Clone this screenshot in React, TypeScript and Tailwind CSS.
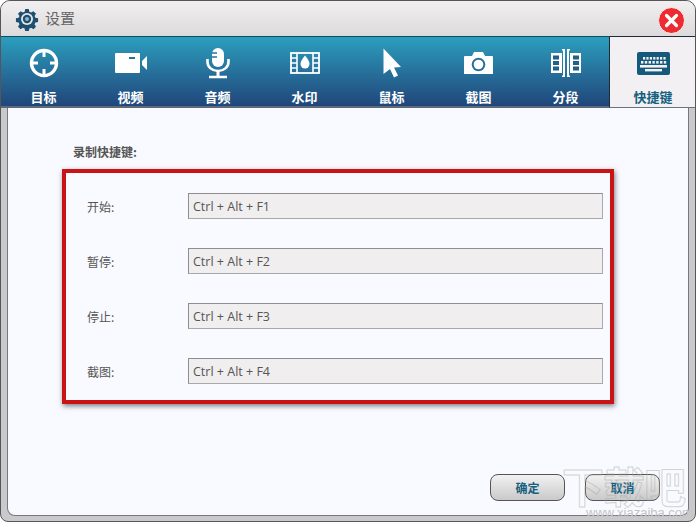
const cjk = { fontFamily: '"Noto Sans CJK SC", sans-serif' };

function Target() {
  return (
    <svg width="32" height="32" viewBox="0 0 32 32" fill="none" stroke="#fff">
      <circle cx="16" cy="16" r="12.5" strokeWidth="3.4" />
      <path d="M16 3v7M16 22v7M3 16h7M22 16h7" strokeWidth="3" />
    </svg>
  );
}
function Video() {
  return (
    <svg width="34" height="22" viewBox="0 0 34 22" fill="#fff">
      <path d="M2 1h23a1 1 0 0 1 1 1v18a1 1 0 0 1-1 1H2a1 1 0 0 1-1-1V2a1 1 0 0 1 1-1z" />
      <path d="M28 9l5-5v14l-5-5z" />
      <rect x="15" y="5" width="6" height="2" fill="#2a7196" />
    </svg>
  );
}
function Mic() {
  return (
    <svg width="26" height="32" viewBox="0 0 26 32" fill="none" stroke="#fff">
      <rect x="7" y="1" width="12" height="19" rx="6" fill="#fff" stroke="none" />
      <path d="M7 6h5M7 10h5" stroke="#27739a" strokeWidth="1.4" />
      <path d="M2.500 12v3a10.500 9 0 0 0 21 0v-3" strokeWidth="2.600" />
      <path d="M13 24v5" strokeWidth="3" />
      <path d="M4 30h18" strokeWidth="2.600" />
    </svg>
  );
}
function Film() {
  return (
    <svg width="30" height="22" viewBox="0 0 30 22" fill="none" stroke="#fff">
      <rect x="1" y="1" width="28" height="20" strokeWidth="1.800" />
      <path d="M7 1v20M23 1v20M1 6h6M1 11h6M1 16h6M23 6h6M23 11h6M23 16h6" strokeWidth="1.600" />
      <path d="M15 3.500c3 3.500 4.500 6 4.500 8.500a4.500 4.500 0 0 1-9 0c0-2.500 1.500-5 4.500-8.500z" fill="#fff" stroke="none" />
    </svg>
  );
}
function Cursor() {
  return (
    <svg width="20" height="30" viewBox="0 0 20 30" fill="#fff">
      <path d="M1.500 0.500L19 19l-7 .5 4 8-4 2-4-8.500-6.500 5z" />
    </svg>
  );
}
function Camera() {
  return (
    <svg width="29" height="24" viewBox="0 0 29 24" fill="#fff">
      <path d="M1 5h7l2-4h9l2 4h7a1 1 0 0 1 1 1v17H0V6a1 1 0 0 1 1-1z" />
      <circle cx="14.500" cy="13.500" r="6.800" fill="#2a6f94" />
      <circle cx="14.500" cy="13.500" r="4.800" fill="#fff" />
    </svg>
  );
}
function Segment() {
  return (
    <svg width="30" height="28" viewBox="0 0 30 28" fill="#fff">
      <path d="M0 4h11v20H0z" />
      <path d="M19 4h11v20H19z" />
      <path d="M11 0h3v28h-3v-1.500h1V1.500h-1z" />
      <path d="M19 0h-3v28h3v-1.500h-1V1.500h1z" />
      <g fill="#235f88">
        <rect x="2" y="6.500" width="6" height="4" />
        <rect x="2" y="12" width="6" height="4" />
        <rect x="2" y="17.500" width="6" height="4" />
        <rect x="22" y="6.500" width="6" height="4" />
        <rect x="22" y="12" width="6" height="4" />
        <rect x="22" y="17.500" width="6" height="4" />
      </g>
    </svg>
  );
}
function Keyboard() {
  const keys: [number, number, number][] = [];
  [0, 1, 2, 3, 4, 5, 6].forEach((i) => keys.push([6 + i * 3.4, 5, 2.2]));
  [0, 1, 2, 3, 4, 5, 6].forEach((i) => keys.push([4 + i * 3.8, 9, 2.4]));
  return (
    <svg width="33" height="23" viewBox="0 0 33 23">
      <rect x="0" y="0" width="33" height="23" rx="2" fill="#155a7c" />
      {keys.map(([x, y, w], i) => (
        <rect key={i} x={x} y={y} width={w} height="2.600" fill="#f2f0f2" />
      ))}
      <rect x="3" y="13" width="27" height="2.600" fill="#f2f0f2" />
      <rect x="8" y="17" width="17" height="2.400" fill="#f2f0f2" />
    </svg>
  );
}

const tabs = [
  { label: "目标", icon: <Target /> },
  { label: "视频", icon: <Video /> },
  { label: "音频", icon: <Mic /> },
  { label: "水印", icon: <Film /> },
  { label: "鼠标", icon: <Cursor /> },
  { label: "截图", icon: <Camera /> },
  { label: "分段", icon: <Segment /> },
];

const rows = [
  ["开始:", "Ctrl + Alt + F1"],
  ["暂停:", "Ctrl + Alt + F2"],
  ["停止:", "Ctrl + Alt + F3"],
  ["截图:", "Ctrl + Alt + F4"],
];

export default function App() {
  return (
    <div className="relative w-[696px] h-[522px] overflow-hidden bg-white" style={cjk}>
      <div className="flex flex-col w-full h-full rounded-t-[10px] rounded-b-[8px] border border-[#55565a] bg-[#c9c9cc] overflow-hidden">
        <div className="relative flex items-center h-[35px] shrink-0 bg-gradient-to-b from-[#f1eff0] to-[#dcdadb] pl-[14px]">
          <svg width="24" height="24" viewBox="0 0 24 24" className="mr-[6px]" fill="#1c4f70">
            <path d="M10 1h4l.6 3 2 .9 2.600-1.600 2.800 2.800-1.600 2.600.9 2 3 .6v4l-3 .6-.9 2 1.600 2.600-2.800 2.800-2.600-1.600-2 .9-.6 3h-4l-.6-3-2-.9-2.600 1.600-2.800-2.800 1.600-2.600-.9-2-3-.6v-4l3-.6.9-2-1.600-2.600 2.800-2.800 2.600 1.600 2-.9z" transform="translate(1.200 1.200) scale(.9)" />
            <circle cx="12" cy="12" r="6" fill="#e8e6e7" />
            <circle cx="12" cy="12" r="4.200" fill="#1c4f70" />
            <circle cx="12" cy="12" r="2" fill="#8fb6cc" />
          </svg>
          <span className="text-[15px] text-[#666]">设置</span>
          <div className="ml-auto mr-[10px] mt-[3px] flex items-center justify-center w-[27px] h-[27px] rounded-full bg-[#ee2b30] border border-[#f5f5f5]">
            <svg width="15" height="15" viewBox="0 0 15 15" stroke="#fff" strokeWidth="3.200" strokeLinecap="round">
              <path d="M2.500 2.500l10 10M12.500 2.500l-10 10" />
            </svg>
          </div>
        </div>
        <div className="flex h-[72px] shrink-0 -ml-[1px] -mr-px border-t border-[#0f4d5e] bg-gradient-to-b from-[#2b9fbe] to-[#20467a] border-b-2 border-b-[#5f6a78]">
          {tabs.map((t) => (
            <div key={t.label} className="flex flex-col items-center w-[87px] shrink-0">
              <div className="flex items-center justify-center h-[52px]">{t.icon}</div>
              <span className="text-[13px] leading-[16px] font-bold text-white">{t.label}</span>
            </div>
          ))}
          <div className="flex flex-col items-center flex-1 -mt-px -mb-[2px] bg-[#f2f0f2] border border-[#1f2a33] border-r-0 border-b-[#6a7280]">
            <div className="flex items-center justify-center h-[52px]"><Keyboard /></div>
            <span className="text-[13px] leading-[16px] font-bold text-[#15607f]">快捷键</span>
          </div>
        </div>
        <div className="flex-1 mx-[6px] mb-[5px] flex flex-col bg-[#f9faff] border-l border-r border-b border-[#77787c] rounded-b-[8px] pl-[55px]">
          <div className="text-[12px] font-bold text-[#555] leading-[16px] mt-[36px] ml-[10px]">录制快捷键:</div>
          <div className="mt-[9px] h-[235px] w-[552px] -ml-px border-[4px] border-[#c91416] shadow-[1px_2px_5px_rgba(0,0,0,0.5)] pl-[21px] pr-[7px] pt-[20px] flex flex-col gap-[29px]">
            {rows.map(([a, b]) => (
              <div key={a} className="flex items-center h-[26px]">
                <span className="w-[101px] pt-px text-[12px] text-[#555]">{a}</span>
                <div className="flex-1 h-[26px] flex items-center pl-[4px] pt-[2px] bg-[#f0eeef] border border-[#a9a9ab] border-t-[#8e8e90] border-l-[#8e8e90] text-[12.500px] text-[#555]" style={{ fontFamily: '"Open Sans", sans-serif' }}>{b}</div>
              </div>
            ))}
          </div>
          <div className="flex gap-[20px] mt-[70px] ml-[427px]">
            {["确定", "取消"].map((s) => (
              <div key={s} className="w-[75px] h-[27px] flex items-center justify-center rounded-[8px] border border-[#555] bg-gradient-to-b from-[#f2f2f2] to-[#c9c9c9] text-[12px] font-bold text-[#15607f]">{s}</div>
            ))}
          </div>
        </div>
      </div>
      <div className="absolute left-[562px] top-[460px] text-[42px] leading-[50px] font-bold tracking-[-1px] text-transparent [-webkit-text-stroke:1px_rgba(170,170,170,0.5)] pointer-events-none">下载吧</div>
      <div className="absolute left-[586px] top-[505px] text-[13px] leading-[15px] text-[#c4c4c8] pointer-events-none" style={{ fontFamily: '"Liberation Sans", sans-serif' }}>www.xiazaiba.com</div>
    </div>
  );
}
